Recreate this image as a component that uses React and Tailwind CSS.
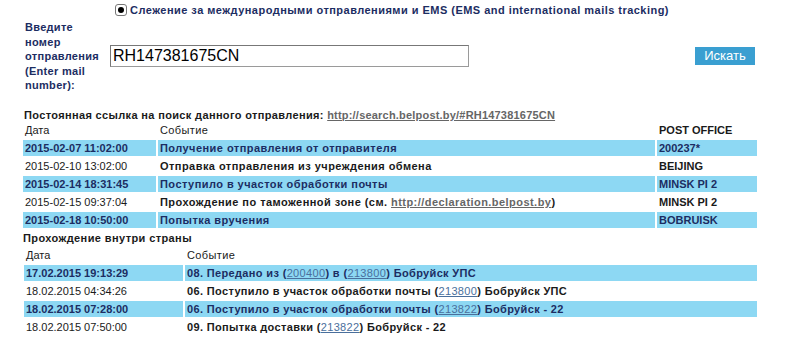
import React from 'react';

const navy = 'text-[#1c2d62]';

const intl = [
  { date: '2015-02-07 11:02:00', event: 'Получение отправления от отправителя', office: '200237*', hl: true },
  { date: '2015-02-10 13:02:00', event: 'Отправка отправления из учреждения обмена', office: 'BEIJING' },
  { date: '2015-02-14 18:31:45', event: 'Поступило в участок обработки почты', office: 'MINSK PI 2', hl: true },
  {
    date: '2015-02-15 09:37:04',
    event: (
      <>
        Прохождение по таможенной зоне (см.{' '}
        <a className="underline text-[#666]">http://declaration.belpost.by</a>)
      </>
    ),
    office: 'MINSK PI 2',
  },
  { date: '2015-02-18 10:50:00', event: 'Попытка вручения', office: 'BOBRUISK', hl: true },
];

const Code = ({ n }) => (
  <>
    (<a className="underline font-normal text-[#4a6f9c]">{n}</a>)
  </>
);

const local = [
  { date: '17.02.2015 19:13:29', event: <>08. Передано из <Code n="200400" /> в <Code n="213800" /> Бобруйск УПС</>, hl: true },
  { date: '18.02.2015 04:34:26', event: <>06. Поступило в участок обработки почты <Code n="213800" /> Бобруйск УПС</> },
  { date: '18.02.2015 07:28:00', event: <>06. Поступило в участок обработки почты <Code n="213822" /> Бобруйск - 22</>, hl: true },
  { date: '18.02.2015 07:50:00', event: <>09. Попытка доставки <Code n="213822" /> Бобруйск - 22</> },
];

const cell = (hl) =>
  `h-[16px] leading-[16px] pl-[2px] whitespace-nowrap ${hl ? `bg-[#8dd8f3] ${navy} font-bold` : 'text-[#1a1a1a]'}`;

export default function App() {
  return (
    <div className="w-[800px] h-[364px] bg-white overflow-hidden font-['Liberation_Sans',Arial,sans-serif] text-[11px]">
      {/* tracking type */}
      <div className="flex items-center h-[14px] mt-[3px] ml-[115px]">
        <span className="w-[12px] h-[12px] border border-[#777] rounded-[3px] bg-white flex items-center justify-center">
          <span className="w-[6px] h-[6px] rounded-full bg-black" />
        </span>
        <span className={`ml-[3px] font-bold tracking-[0.47px] ${navy}`}>
          Слежение за международными отправлениями и EMS (EMS and international mails tracking)
        </span>
      </div>

      {/* search form */}
      <div className="flex h-[88px] mt-[3px]">
        <div className={`w-[110px] pl-[25px] leading-[14.5px] font-bold tracking-[0.3px] ${navy}`}>
          Введите<br />номер<br />отправления<br />(Enter mail<br />number):
        </div>
        <div className="pt-[25px]">
          <div className="w-[359px] h-[22px] border border-[#9a9a9a] border-t-[#777] border-l-[#777] pl-[2px] text-[16px] leading-[20px] text-black">
            RH147381675CN
          </div>
        </div>
        <div className="ml-[226px] pt-[27px]">
          <button className="w-[60px] h-[18px] bg-[#3a9fd1] text-white text-[13px] leading-[18px]">Искать</button>
        </div>
      </div>

      {/* permalink */}
      <div className="h-[14px] leading-[14px] pl-[24px] font-bold tracking-[0.35px] text-[#1a1a1a]">
        Постоянная ссылка на поиск данного отправления:{' '}
        <a className="underline text-[#666] tracking-[0.2px]">http://search.belpost.by/#RH147381675CN</a>
      </div>

      {/* international table */}
      <div className="ml-[23px] grid grid-cols-[133px_497px_100px] gap-[2px]">
        <div className={cell(false)}>Дата</div>
        <div className={`${cell(false)} tracking-[0.4px]`}>Событие</div>
        <div className={`${cell(false)} font-bold`}>POST OFFICE</div>
        {intl.map((r) => (
          <React.Fragment key={r.date}>
            <div className={cell(r.hl)}>{r.date}</div>
            <div className={`${cell(r.hl)} font-bold tracking-[0.45px]`}>{r.event}</div>
            <div className={`${cell(r.hl)} font-bold`}>{r.office}</div>
          </React.Fragment>
        ))}
      </div>

      {/* domestic */}
      <div className="mt-[2px] h-[17px] leading-[17px] pl-[23px] font-bold tracking-[0.4px] text-[#1a1a1a]">
        Прохождение внутри страны
      </div>
      <div className="ml-[24px] grid grid-cols-[159px_572px] gap-[2px]">
        <div className={cell(false)}>Дата</div>
        <div className={`${cell(false)} tracking-[0.4px]`}>Событие</div>
        {local.map((r) => (
          <React.Fragment key={r.date}>
            <div className={cell(r.hl)}>{r.date}</div>
            <div className={`${cell(r.hl)} font-bold tracking-[0.35px]`}>{r.event}</div>
          </React.Fragment>
        ))}
      </div>
    </div>
  );
}
